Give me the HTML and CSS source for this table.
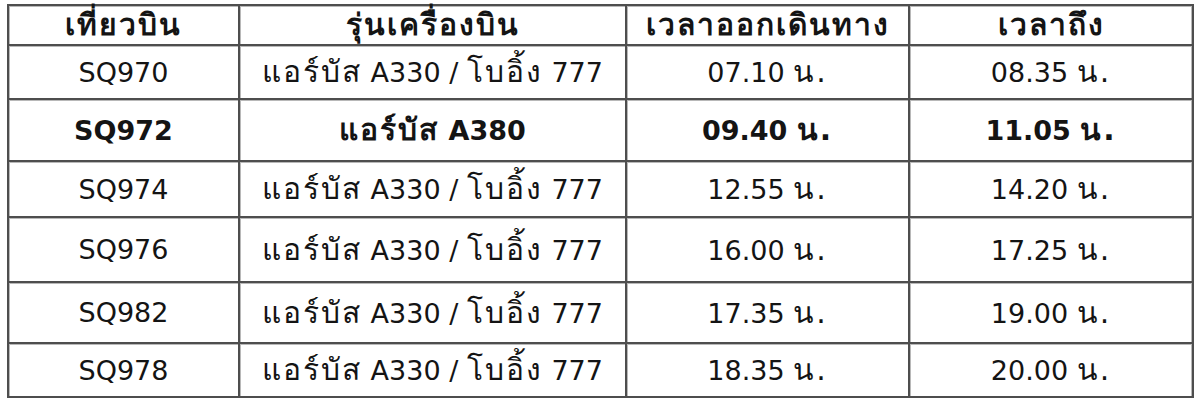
FILE: index.html
```html
<!DOCTYPE html>
<html lang="th">
<head>
<meta charset="utf-8">
<title>ตารางเที่ยวบิน</title>
<link rel="stylesheet" href="styles.css">
</head>
<body>
<div class="wrap">
<table class="flights">
  <colgroup>
    <col class="c1"><col class="c2"><col class="c3"><col class="c4">
  </colgroup>
  <thead>
    <tr><th><span class="th">เที่ยวบิน</span></th><th><span class="th">รุ่นเครื่องบิน</span></th><th><span class="th">เวลาออกเดินทาง</span></th><th><span class="th">เวลาถึง</span></th></tr>
  </thead>
  <tbody>
    <tr><td>SQ970</td><td><span class="th">แอร์บัส</span> A330 / <span class="th">โบอิ้ง</span> 777</td><td>07.10 <span class="th">น.</span></td><td>08.35 <span class="th">น.</span></td></tr>
    <tr class="hl"><td>SQ972</td><td><span class="th">แอร์บัส</span> A380</td><td>09.40 <span class="th">น.</span></td><td>11.05 <span class="th">น.</span></td></tr>
    <tr><td>SQ974</td><td><span class="th">แอร์บัส</span> A330 / <span class="th">โบอิ้ง</span> 777</td><td>12.55 <span class="th">น.</span></td><td>14.20 <span class="th">น.</span></td></tr>
    <tr><td>SQ976</td><td><span class="th">แอร์บัส</span> A330 / <span class="th">โบอิ้ง</span> 777</td><td>16.00 <span class="th">น.</span></td><td>17.25 <span class="th">น.</span></td></tr>
    <tr><td>SQ982</td><td><span class="th">แอร์บัส</span> A330 / <span class="th">โบอิ้ง</span> 777</td><td>17.35 <span class="th">น.</span></td><td>19.00 <span class="th">น.</span></td></tr>
    <tr><td>SQ978</td><td><span class="th">แอร์บัส</span> A330 / <span class="th">โบอิ้ง</span> 777</td><td>18.35 <span class="th">น.</span></td><td>20.00 <span class="th">น.</span></td></tr>
  </tbody>
</table>
</div>
</body>
</html>
```
FILE: styles.css
```css
html, body {
  margin: 0;
  padding: 0;
  background: #ffffff;
}
.wrap {
  padding: 4px 0 0 7px;
}
.flights {
  border-collapse: separate;
  border-spacing: 0;
  table-layout: fixed;
  width: 1187px;
  border-right: 2px solid #4e4e4e;
  border-bottom: 2px solid #4e4e4e;
  font-family: "DejaVu Sans", Tahoma, sans-serif;
  font-size: 27px;
  color: #141414;
}
.c1 { width: 231px; }
.c2 { width: 387px; }
.c3 { width: 283px; }
.c4 { width: 284px; }
.flights th,
.flights td {
  border-top: 2px solid #4e4e4e;
  border-left: 2px solid #4e4e4e;
  box-shadow: inset 1px 1px 0 #b8b8b8;
  padding: 0;
  text-align: center;
  vertical-align: middle;
  white-space: nowrap;
  line-height: 1;
}
.flights th:last-child,
.flights td:last-child {
  box-shadow: inset 1px 1px 0 #b8b8b8, inset -1px 0 0 #b8b8b8;
}
.flights th {
  font-weight: bold;
  height: 38px;
}
.flights td {
  font-weight: normal;
}
.th {
  font-size: 30px;
  letter-spacing: 2px;
  line-height: 1;
}
.flights tbody tr:nth-child(1) td { height: 52px; }
.flights tbody tr:nth-child(2) td { height: 60px; }
.flights tbody tr:nth-child(3) td { height: 54px; }
.flights tbody tr:nth-child(4) td { height: 63px; }
.flights tbody tr:nth-child(5) td { height: 59px; }
.flights tbody tr:nth-child(6) td { height: 52px; }
.flights tr.hl td {
  font-weight: bold;
}
```
